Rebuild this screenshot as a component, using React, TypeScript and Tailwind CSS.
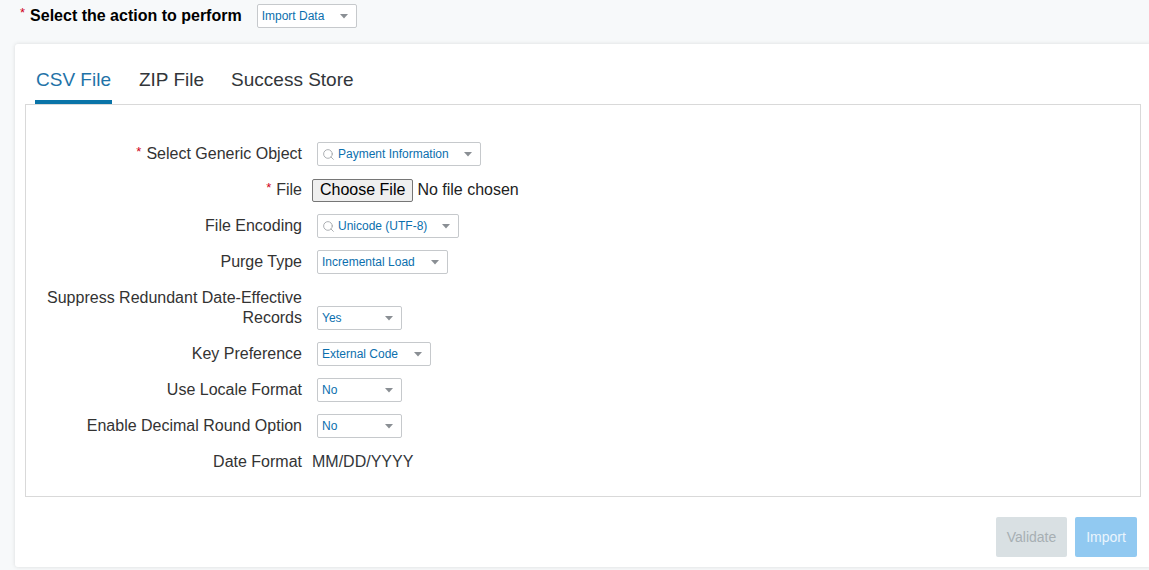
import { FC, ReactNode } from "react";
import { Search } from "lucide-react";

const Caret = () => (
    <svg width="8" height="5" viewBox="0 0 8 5" className="shrink-0">
        <path d="M0 0 L8 0 L4 4.5 Z" fill="#8a8f94" />
    </svg>
);

const Select: FC<{ value: string; width: string; search?: boolean }> = ({ value, width, search }) => (
    <div className={`flex h-[24px] items-center border border-[#c6c9cc] bg-white pl-[4px] pr-[8px] text-[12px] text-[#0b6fae] rounded-[2px] ${width}`}>
        {search && <Search size={13} strokeWidth={1.6} className="mr-[3px] shrink-0 text-[#a0a4a8]" />}
        <span className="flex-1 truncate">{value}</span>
        <Caret />
    </div>
);

const Req = () => <span className="mr-[5px] text-[13px] text-[#d0021b] relative -top-[3px]">*</span>;

const Row: FC<{ label: ReactNode; children: ReactNode; tall?: boolean }> = ({ label, children, tall }) => (
    <div className={`flex ${tall ? "h-[44px] items-center" : "h-[24px] items-center"}`}>
        <div className="w-[276px] shrink-0 text-right text-[16px] leading-[20px] text-[#333]">{label}</div>
        <div className={`ml-[15px] flex items-center ${tall ? "self-end" : ""}`}>{children}</div>
    </div>
);

const App = () => {
    return (
        <div className="h-[570px] w-[1149px] overflow-hidden bg-[#f7f9fa]" style={{ fontFamily: '"Liberation Sans", Arial, sans-serif' }}>
            <div className="flex h-[44px] items-start pl-[20px] pt-[4px]">
                <div className="flex h-[24px] items-center">
                    <Req />
                    <span className="text-[16px] font-bold text-black">Select the action to perform</span>
                </div>
                <div className="ml-[15px]">
                    <Select value="Import Data" width="w-[100px]" />
                </div>
            </div>

            <div className="ml-[15px] w-[1136px] rounded-[3px] bg-white px-[10px] pb-[10px] shadow-[0_0_4px_rgba(0,0,0,0.12)]">
                <div className="flex gap-[27px] pl-[10px] pt-[24px]">
                    <div className="flex flex-col">
                        <span className="px-[1px] text-[19px] leading-[23px] text-[#1f73a8]">CSV File</span>
                        <div className="mt-[9px] h-[4px] bg-[#0a74a8]" />
                    </div>
                    <span className="text-[19px] leading-[23px] text-[#32363a]">ZIP File</span>
                    <span className="text-[19px] leading-[23px] text-[#32363a]">Success Store</span>
                </div>

                <div className="flex h-[393px] flex-col gap-[12px] border border-[#d9d9d9] pt-[37px]">
                    <Row label={<><Req />Select Generic Object</>}>
                        <Select value="Payment Information" width="w-[164px]" search />
                    </Row>
                    <Row label={<><Req />File</>}>
                        <div className="-ml-[5px] flex items-center">
                            <button className="h-[23px] rounded-[2px] border border-[#767676] bg-[#efefef] px-[7px] text-[16px] leading-[20px] text-black">Choose File</button>
                            <span className="ml-[4px] text-[16px] text-[#222]">No file chosen</span>
                        </div>
                    </Row>
                    <Row label="File Encoding">
                        <Select value="Unicode (UTF-8)" width="w-[142px]" search />
                    </Row>
                    <Row label="Purge Type">
                        <Select value="Incremental Load" width="w-[131px]" />
                    </Row>
                    <Row label={<>Suppress Redundant Date-Effective<br />Records</>} tall>
                        <Select value="Yes" width="w-[85px]" />
                    </Row>
                    <Row label="Key Preference">
                        <Select value="External Code" width="w-[114px]" />
                    </Row>
                    <Row label="Use Locale Format">
                        <Select value="No" width="w-[85px]" />
                    </Row>
                    <Row label="Enable Decimal Round Option">
                        <Select value="No" width="w-[85px]" />
                    </Row>
                    <Row label="Date Format">
                        <span className="-ml-[5px] text-[16px] text-[#32363a]">MM/DD/YYYY</span>
                    </Row>
                </div>

                <div className="flex justify-end gap-[8px] pr-[4px] pt-[20px]">
                    <button className="h-[40px] w-[71px] rounded-[2px] bg-[#d9e0e3] text-[14px] text-[#a7afb3]">Validate</button>
                    <button className="h-[40px] w-[62px] rounded-[2px] bg-[#91c9f1] text-[14px] text-[#eaf5fd]">Import</button>
                </div>
            </div>
        </div>
    );
};

export default App;
